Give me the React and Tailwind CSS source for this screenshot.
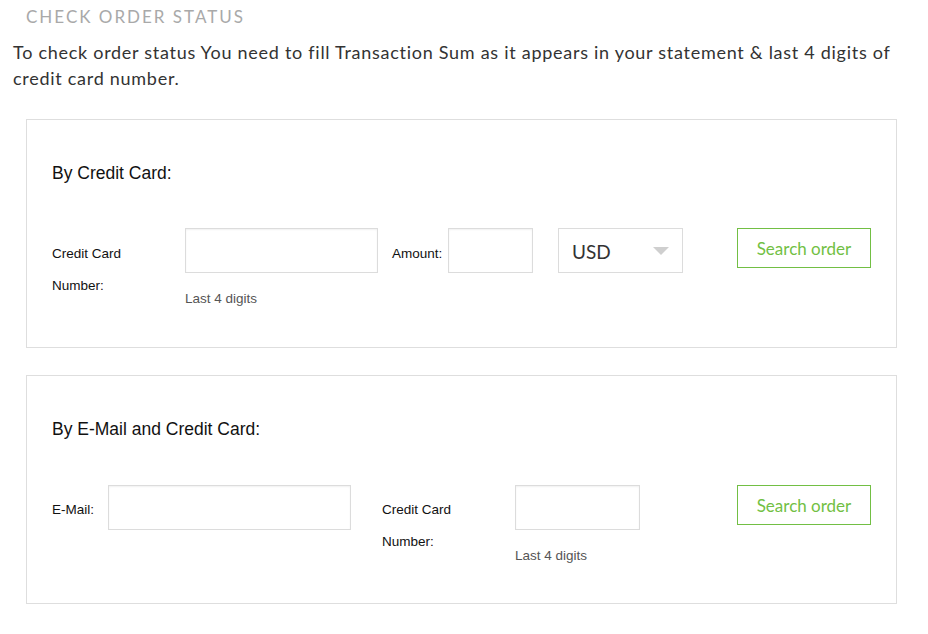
import React from "react";

const pt = { fontFamily: "Lato, 'Open Sans', sans-serif" };
const arial = { fontFamily: "'Liberation Sans', Arial, sans-serif" };

const TextInput = ({ className }) => (
  <input
    type="text"
    className={`h-[45px] border border-[#dcdcdc] bg-white shadow-[inset_0_1px_2px_rgba(0,0,0,0.06)] outline-none ${className}`}
  />
);

const SearchButton = () => (
  <button
    className="ml-auto mr-[25px] h-[40px] w-[134px] border border-[#72bf44] bg-white pt-[2px] text-[17px] text-[#72bf44]"
    style={pt}
  >
    Search order
  </button>
);

const CheckOrderStatus = () => {
  return (
    <div className="min-h-screen bg-white px-[13px] pt-[6px]" style={arial}>
      <h1
        className="ml-[13px] text-[17px] leading-[22px] tracking-[2px] text-[#a9a9a9]"
        style={pt}
      >
        CHECK ORDER STATUS
      </h1>
      <p
        className="mt-[11px] text-[18px] leading-[26px] tracking-[0.72px] text-[#333]"
        style={pt}
      >
        To check order status You need to fill Transaction Sum as it appears in
        your statement &amp; last 4 digits of credit card number.
      </p>

      {/* By Credit Card */}
      <div className="ml-[13px] mt-[28px] h-[229px] w-[871px] border border-[#dedede] pl-[25px] pt-[43px]">
        <h2 className="text-[17.5px] leading-[20px] text-[#111]">
          By Credit Card:
        </h2>
        <div className="mt-[45px] flex items-start">
          <label className="w-[133px] pt-[10px] text-[13.5px] leading-[32px] text-[#111]">
            Credit Card
            <br />
            Number:
          </label>
          <div>
            <TextInput className="w-[193px]" />
            <div className="mt-[18px] text-[13.5px] leading-[16px] text-[#555]">
              Last 4 digits
            </div>
          </div>
          <label className="ml-[14px] w-[56px] pt-[10px] text-[13.5px] leading-[32px] text-[#111]">
            Amount:
          </label>
          <TextInput className="w-[85px]" />
          <div
            className="ml-[25px] flex h-[45px] w-[125px] items-center justify-between border border-[#dcdcdc] bg-white pl-[13px] pr-[13px] pt-[3px] text-[19px] text-[#333]"
            style={pt}
          >
            <span>USD</span>
            <svg width="16" height="8" viewBox="0 0 16 8" className="-mt-[3px]">
              <path d="M0 0 L16 0 L8 8 Z" fill="#cfcfcf" />
            </svg>
          </div>
          <SearchButton />
        </div>
      </div>

      {/* By E-Mail and Credit Card */}
      <div className="ml-[13px] mt-[27px] h-[229px] w-[871px] border border-[#dedede] pl-[25px] pt-[43px]">
        <h2 className="text-[17.5px] leading-[20px] text-[#111]">
          By E-Mail and Credit Card:
        </h2>
        <div className="mt-[46px] flex items-start">
          <label className="w-[56px] pt-[9px] text-[13.5px] leading-[32px] text-[#111]">
            E-Mail:
          </label>
          <TextInput className="w-[243px]" />
          <label className="ml-[31px] w-[133px] pt-[9px] text-[13.5px] leading-[32px] text-[#111]">
            Credit Card
            <br />
            Number:
          </label>
          <div>
            <TextInput className="w-[125px]" />
            <div className="mt-[18px] text-[13.5px] leading-[16px] text-[#555]">
              Last 4 digits
            </div>
          </div>
          <SearchButton />
        </div>
      </div>
    </div>
  );
};

export default CheckOrderStatus;
